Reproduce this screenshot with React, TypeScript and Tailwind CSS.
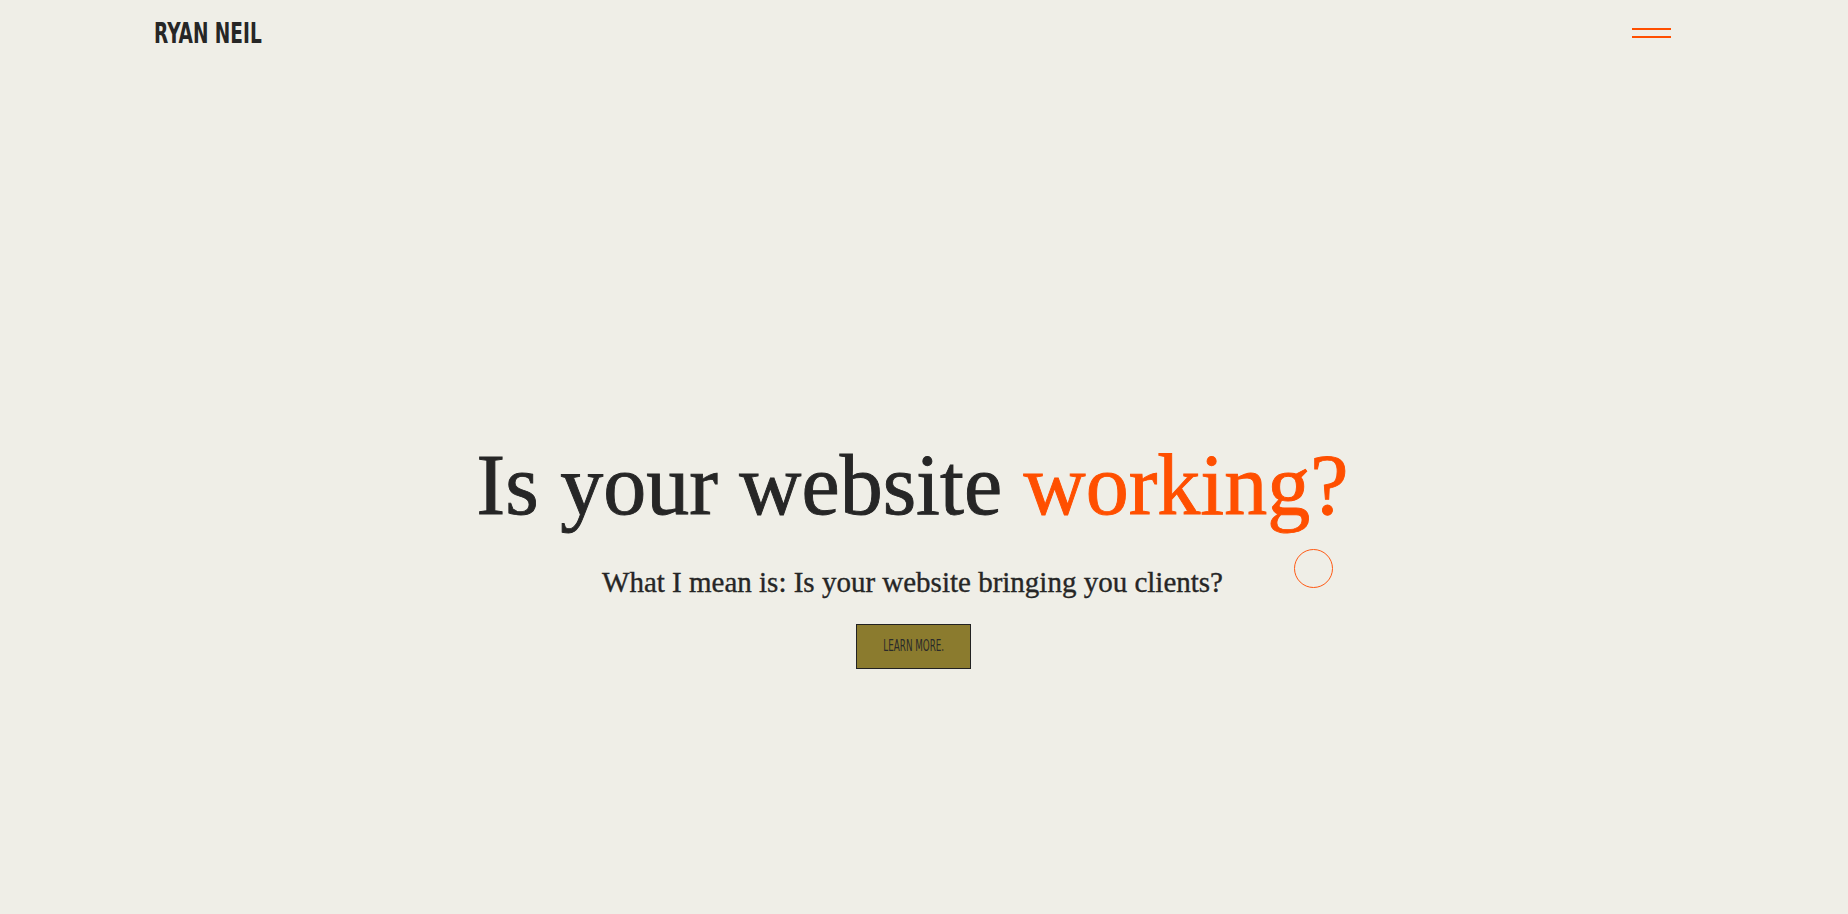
import React from 'react';

export default function App() {
  return (
    <div className="relative min-h-screen w-full overflow-hidden bg-[#efeee7] text-[#262626]">
      <header className="flex items-start justify-between pl-[154px] pr-[177px] pt-[19px]">
        <a href="#" className="block origin-left scale-x-[0.71] font-['DejaVu_Sans_Condensed',sans-serif] text-[29px] font-bold leading-none">
          RYAN NEIL
        </a>
        <button className="mt-[9px] flex w-[39px] flex-col gap-[6px]" aria-label="Menu">
          <span className="block h-[2px] w-full bg-[#ff4f00]" />
          <span className="block h-[2px] w-full bg-[#ff4f00]" />
        </button>
      </header>

      <main className="flex flex-col items-center pl-[154px] pr-[177px] pt-[394px]">
        <h1 className="font-['Liberation_Serif',serif] text-[86px] leading-none [-webkit-text-stroke:0.9px_currentColor]">
          Is your website <span className="text-[#ff4f00]">working?</span>
        </h1>
        <p className="mt-[40px] font-['Liberation_Serif',serif] text-[29px] leading-none [-webkit-text-stroke:0.35px_currentColor]">
          What I mean is: Is your website bringing you clients?
        </p>
        <a
          href="#"
          className="ml-[2px] mt-[27px] flex h-[45px] w-[115px] items-center justify-center border border-[#222] bg-[#8b7b2e] font-['DejaVu_Sans_Condensed',sans-serif] text-[15px] uppercase leading-none text-[#2a2a2a]"
        >
          <span className="block scale-x-[0.65] whitespace-nowrap">Learn more.</span>
        </a>
      </main>

      <div className="pointer-events-none absolute left-[1294px] top-[549px] h-[39px] w-[39px] rounded-full border border-[#ff5a14]" />
    </div>
  );
}
